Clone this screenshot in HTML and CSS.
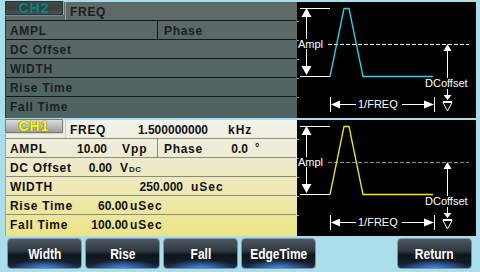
FILE: index.html
```html
<!DOCTYPE html>
<html>
<head>
<meta charset="utf-8">
<link rel="stylesheet" href="styles.css">
</head>
<body>
<div class="screen">
  <section class="ch ch2">
    <div class="panel">
      <div class="row freq-row">
        <div class="tab"><span class="tab-text">CH2</span></div>
        <div class="freq-cell"><span class="lbl freq-lbl">FREQ</span></div>
      </div>
      <div class="row">
        <div class="ampl-cell"><span class="lbl">AMPL</span></div>
        <div class="phase-cell"><span class="lbl">Phase</span></div>
      </div>
      <div class="row"><span class="lbl">DC Offset</span></div>
      <div class="row"><span class="lbl">WIDTH</span></div>
      <div class="row"><span class="lbl">Rise Time</span></div>
      <div class="row last"><span class="lbl">Fall Time</span></div>
    </div>
    <div class="graph">
      <svg width="179" height="116" viewBox="0 0 179 116">
        <g class="ticks">
          <line x1="0" y1="19.5" x2="2" y2="19.5"/>
          <line x1="0" y1="38.5" x2="2" y2="38.5"/>
          <line x1="0" y1="57.5" x2="2" y2="57.5"/>
          <line x1="0" y1="76.5" x2="2" y2="76.5"/>
          <line x1="0" y1="95.5" x2="2" y2="95.5"/>
        </g>
        <g class="marks">
          <line x1="3" y1="6.5" x2="33" y2="6.5"/>
          <polygon points="9.5,6 4.5,15 14.5,15"/>
          <line x1="9.5" y1="15" x2="9.5" y2="37"/>
          <line x1="9.5" y1="47" x2="9.5" y2="64"/>
          <polygon points="4.5,64 14.5,64 9.5,73"/>
          <line x1="3" y1="74.5" x2="33" y2="74.5"/>
          <polygon points="150.5,42 146.5,49 154.5,49"/>
          <line x1="150.5" y1="49" x2="150.5" y2="76"/>
          <line x1="150.5" y1="87" x2="150.5" y2="93"/>
          <polygon points="146.5,93 154.5,93 150.5,98"/>
          <line x1="146" y1="99.5" x2="155" y2="99.5"/>
          <polygon class="hollow" points="146,100.5 155,100.5 150.5,109"/>
          <line x1="33.5" y1="95" x2="33.5" y2="110"/>
          <line x1="137.5" y1="95" x2="137.5" y2="110"/>
          <polygon points="34,102.5 43,98.5 43,106.5"/>
          <line x1="43" y1="102.5" x2="59" y2="102.5"/>
          <line x1="105" y1="102.5" x2="127" y2="102.5"/>
          <polygon points="137,102.5 127,98.5 127,106.5"/>
        </g>
        <line class="dash dash-white" x1="31" y1="42.5" x2="172" y2="42.5"/>
        <polyline class="wave wave-cyan" points="33,74.5 47,6.5 52,6.5 66,74.5 136,74.5"/>
        <text class="gtxt" x="1" y="46">Ampl</text>
        <text class="gtxt" x="128" y="85">DCoffset</text>
        <text class="gtxt" x="61" y="106">1/FREQ</text>
      </svg>
    </div>
  </section>

  <section class="ch ch1">
    <div class="panel">
      <div class="row freq-row">
        <div class="tab"><span class="tab-text">CH1</span></div>
        <div class="freq-cell"><span class="lbl freq-lbl">FREQ</span><span class="val v-freq">1.500000000</span><span class="unit u-freq">kHz</span></div>
      </div>
      <div class="row">
        <div class="ampl-cell"><span class="lbl">AMPL</span><span class="val v-ampl">10.00</span><span class="unit u-ampl">Vpp</span></div>
        <div class="phase-cell"><span class="lbl phase-lbl">Phase</span><span class="val v-phase">0.0</span><span class="unit u-phase">°</span></div>
      </div>
      <div class="row"><span class="lbl">DC Offset</span><span class="val v-dc">0.00</span><span class="unit u-dc">V<span class="sc">DC</span></span></div>
      <div class="row"><span class="lbl">WIDTH</span><span class="val v-width">250.000</span><span class="unit u-width">uSec</span></div>
      <div class="row"><span class="lbl">Rise Time</span><span class="val v-time">60.00</span><span class="unit u-time">uSec</span></div>
      <div class="row last"><span class="lbl">Fall Time</span><span class="val v-time">100.00</span><span class="unit u-time">uSec</span></div>
    </div>
    <div class="graph">
      <svg width="179" height="116" viewBox="0 0 179 116">
        <g class="ticks">
          <line x1="0" y1="19.5" x2="2" y2="19.5"/>
          <line x1="0" y1="38.5" x2="2" y2="38.5"/>
          <line x1="0" y1="57.5" x2="2" y2="57.5"/>
          <line x1="0" y1="76.5" x2="2" y2="76.5"/>
          <line x1="0" y1="95.5" x2="2" y2="95.5"/>
        </g>
        <g class="marks">
          <line x1="3" y1="6.5" x2="33" y2="6.5"/>
          <polygon points="9.5,6 4.5,15 14.5,15"/>
          <line x1="9.5" y1="15" x2="9.5" y2="37"/>
          <line x1="9.5" y1="47" x2="9.5" y2="64"/>
          <polygon points="4.5,64 14.5,64 9.5,73"/>
          <line x1="3" y1="74.5" x2="33" y2="74.5"/>
          <polygon points="150.5,42 146.5,49 154.5,49"/>
          <line x1="150.5" y1="49" x2="150.5" y2="76"/>
          <line x1="150.5" y1="87" x2="150.5" y2="93"/>
          <polygon points="146.5,93 154.5,93 150.5,98"/>
          <line x1="146" y1="99.5" x2="155" y2="99.5"/>
          <polygon class="hollow" points="146,100.5 155,100.5 150.5,109"/>
          <line x1="33.5" y1="95" x2="33.5" y2="110"/>
          <line x1="137.5" y1="95" x2="137.5" y2="110"/>
          <polygon points="34,102.5 43,98.5 43,106.5"/>
          <line x1="43" y1="102.5" x2="59" y2="102.5"/>
          <line x1="105" y1="102.5" x2="127" y2="102.5"/>
          <polygon points="137,102.5 127,98.5 127,106.5"/>
        </g>
        <line class="dash dash-grey" x1="31" y1="42.5" x2="172" y2="42.5"/>
        <polyline class="wave wave-yellow" points="33,74.5 47,6.5 52,6.5 66,74.5 136,74.5"/>
        <text class="gtxt" x="1" y="46">Ampl</text>
        <text class="gtxt" x="128" y="85">DCoffset</text>
        <text class="gtxt" x="61" y="106">1/FREQ</text>
      </svg>
    </div>
  </section>

  <nav class="softkeys">
    <button class="key"><span class="key-label">Width</span></button>
    <button class="key"><span class="key-label">Rise</span></button>
    <button class="key"><span class="key-label">Fall</span></button>
    <button class="key"><span class="key-label">EdgeTime</span></button>
    <button class="key key-return"><span class="key-label">Return</span></button>
  </nav>
</div>
</body>
</html>
```

FILE: styles.css
```css
html, body {
  margin: 0;
  padding: 0;
}
body {
  width: 480px;
  height: 272px;
  overflow: hidden;
  background: #a9deea;
  font-family: "Liberation Sans", Arial, sans-serif;
}
.screen {
  display: flex;
  flex-direction: column;
  gap: 2px;
  padding: 2px 4px 0 5px;
}
.ch {
  display: flex;
  height: 116px;
}
.panel {
  width: 292px;
  box-sizing: border-box;
  display: flex;
  flex-direction: column;
  border-left: 1px solid #2f3b39;
}
.ch2 .panel {
  background: linear-gradient(#5f6a68, #4d6361);
  color: #1c1f1f;
}
.ch1 .panel {
  background: linear-gradient(#f3f2ec, #eeecd6 25%, #ede8b4 60%, #ece586);
  border-left-color: #a4a49a;
  color: #121212;
}
.row {
  height: 19px;
  flex: none;
  box-sizing: border-box;
  display: flex;
  align-items: flex-start;
  line-height: 20px;
  font-size: 12px;
  font-weight: bold;
  white-space: nowrap;
  border-bottom: 1px solid #141918;
  margin-right: 1px;
}
.ch1 .row {
  border-bottom-color: #8b8b82;
}
.row.last {
  flex: 1;
  border-bottom: none;
}
.lbl {
  flex: none;
  width: 60px;
  padding-left: 4px;
  letter-spacing: 0.7px;
}
.val {
  flex: none;
  text-align: right;
}
.unit {
  flex: none;
  letter-spacing: 1px;
}
.sc {
  font-size: 8px;
  letter-spacing: 0.5px;
}
.tab {
  flex: none;
  width: 58px;
  height: 14px;
  box-sizing: border-box;
  margin: -1px 0 0 -1px;
  display: flex;
  align-items: center;
  justify-content: center;
}
.tab-text {
  display: block;
  font-size: 14px;
  line-height: 14px;
  height: 14px;
  letter-spacing: 1px;
  font-weight: bold;
}
.ch2 .tab {
  background: linear-gradient(#454a49, #3a403f 50%, #4c5351);
  border: 1px solid #2b3436;
  box-shadow: 1px 0 0 #86aab4, 0 1px 0 #6f8a90;
  color: #0e8686;
}
.ch2 .tab-text {
  text-shadow: 0 0 1px #0a3a3a;
}
.ch1 .tab {
  background: linear-gradient(#dcdcdc, #bdbdbd 50%, #9c9c9c);
  border: 1px solid #7e7e7e;
  box-shadow: 1px 0 0 #e2e2e2, 0 1px 0 #d0d0d0;
  color: #ffff00;
}
.ch1 .tab-text {
  text-shadow: 0 0 1px #5a5a10, 0 0 1px #5a5a10;
}
.freq-cell {
  flex: 1;
  display: flex;
  height: 18px;
  margin-left: 2px;
  border-left: 1px solid #8aa3a8;
}
.ch1 .freq-cell {
  border-left-color: #c8c8c0;
}
.freq-lbl {
  width: 36px;
}
.v-freq { width: 102px; }
.u-freq { margin-left: 20px; }
.ampl-cell {
  flex: none;
  width: 151px;
  display: flex;
  height: 18px;
  border-right: 1px solid #141918;
}
.ch1 .ampl-cell {
  border-right-color: #8b8b82;
}
.phase-cell {
  flex: 1;
  display: flex;
  padding-left: 2px;
}
.phase-lbl { width: 60px; }
.v-ampl { width: 37px; }
.u-ampl { margin-left: 15px; }
.v-phase { width: 24px; }
.u-phase { margin-left: 7px; font-size: 11px; line-height: 16px; }
.v-dc { width: 42px; }
.u-dc { margin-left: 8px; }
.v-width { width: 113px; }
.u-width { margin-left: 8px; }
.v-time { width: 58px; }
.u-time { margin-left: 2px; }

.graph {
  width: 179px;
  height: 116px;
  background: #000;
}
.graph svg {
  display: block;
}
.ticks line {
  stroke: #9a9a9a;
  stroke-width: 1;
}
.marks line {
  stroke: #fff;
  stroke-width: 1;
}
.marks polygon {
  fill: #fff;
  stroke: none;
}
.marks polygon.hollow {
  fill: none;
  stroke: #fff;
  stroke-width: 1;
}
.dash {
  stroke-width: 1;
  stroke-dasharray: 4 2;
}
.dash-white { stroke: #fff; }
.dash-grey { stroke: #8a8a8a; }
.wave {
  fill: none;
  stroke-width: 1.3;
}
.wave-cyan { stroke: #27d8e8; }
.wave-yellow { stroke: #f2ea00; }
.gtxt {
  fill: #fff;
  font-family: "Liberation Sans", Arial, sans-serif;
  font-size: 11px;
}

.softkeys {
  display: grid;
  grid-template-columns: repeat(6, 75px);
  gap: 3px;
  padding-left: 2px;
  height: 31px;
}
.key {
  height: 31px;
  padding: 0;
  border: 1px solid #8694a0;
  border-radius: 4px;
  background:
    radial-gradient(ellipse 45% 30% at 50% 100%, rgba(70, 140, 230, 0.95), rgba(40, 90, 170, 0) 100%),
    linear-gradient(#4d5862, #313a43 40%, #0f151b 55%, #131c27 80%, #1b3356);
  color: #fff;
  font-family: "Liberation Sans", Arial, sans-serif;
  font-weight: bold;
  font-size: 15px;
  overflow: hidden;
}
.key-label {
  display: inline-block;
  transform: scaleX(0.8);
}
.key-return {
  grid-column: 6;
}
```
